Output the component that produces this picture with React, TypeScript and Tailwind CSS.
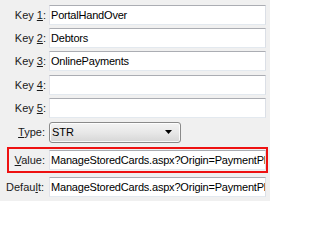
import React from "react";

const font = { fontFamily: '"Liberation Sans", Arial, sans-serif' };

function Box({ children }: { children?: React.ReactNode }) {
  return (
    <div className="flex h-[20px] w-[217px] shrink-0 items-center overflow-hidden whitespace-nowrap border border-t-[#abadb3] border-l-[#e2e3ea] border-r-[#dbdfe6] border-b-[#e3e9ef] bg-white pl-[1px] text-[11px] tracking-[-0.2px] text-black">
      {children}
    </div>
  );
}

function KeyRow({ n, value, mt }: { n: string; value?: string; mt: string }) {
  return (
    <div className={`flex items-center ${mt}`}>
      <div className="w-[49px] shrink-0 pr-[3px] text-right text-[11px] text-[#1a1a1a]">
        Key <span className="underline">{n}</span>:
      </div>
      <Box>{value}</Box>
    </div>
  );
}

export default function App() {
  return (
    <div className="h-[201px] w-[270px] overflow-hidden bg-[#f0f0f0]" style={font}>
      <KeyRow n="1" value="PortalHandOver" mt="mt-[5px]" />
      <KeyRow n="2" value="Debtors" mt="mt-[3px]" />
      <KeyRow n="3" value="OnlinePayments" mt="mt-[3px]" />
      <KeyRow n="4" mt="mt-[4px]" />
      <KeyRow n="5" mt="mt-[3px]" />
      <div className="mt-[4px] flex items-center">
        <div className="w-[49px] shrink-0 pr-[4px] text-right text-[11px] text-[#1a1a1a]">
          <span className="underline">T</span>ype:
        </div>
        <div className="relative flex h-[21px] w-[132px] items-center rounded-[3px] border border-[#8a8a8a] bg-gradient-to-b from-[#f3f3f3] via-[#e8e8e8] to-[#d6d6d6] pl-[2px] text-[11px] text-black shadow-[inset_0_0_0_1px_rgba(255,255,255,0.8)]">
          STR
          <svg className="absolute right-[7px] top-[7px]" width="8" height="5" viewBox="0 0 8 5">
            <path d="M0 0 L7 0 L3.5 4 Z" fill="#000" />
          </svg>
        </div>
      </div>
      <div className="ml-[7px] mt-[4px] flex h-[26px] w-[261px] items-center border-2 border-[#ee1111]">
        <div className="w-[40px] shrink-0 pr-[4px] text-right text-[11px] text-[#1a1a1a]">
          <span className="underline">V</span>alue:
        </div>
        <Box>ManageStoredCards.aspx?Origin=PaymentPl</Box>
      </div>
      <div className="mt-[4px] flex items-center">
        <div className="w-[49px] shrink-0 pr-[5px] text-right text-[11px] text-[#1a1a1a]">
          Defau<span className="underline">l</span>t:
        </div>
        <Box>ManageStoredCards.aspx?Origin=PaymentPl</Box>
      </div>
    </div>
  );
}
